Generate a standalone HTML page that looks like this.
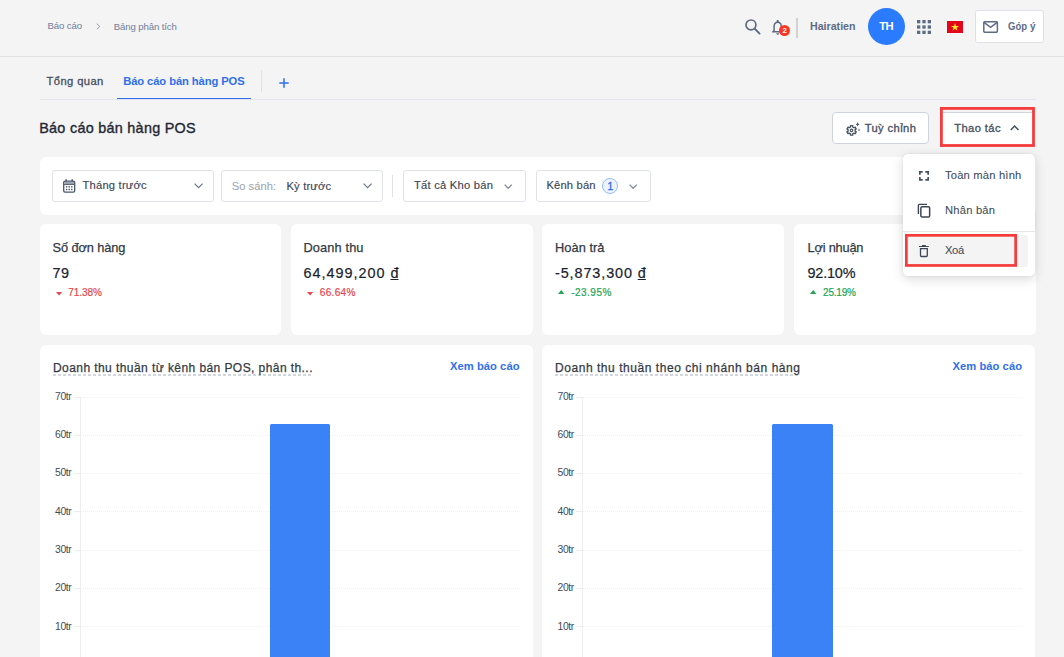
<!DOCTYPE html>
<html><head><meta charset="utf-8">
<style>
*{margin:0;padding:0;box-sizing:border-box}
html,body{width:1064px;height:657px;overflow:hidden;background:#f4f4f4;font-family:"Liberation Sans",sans-serif}
.a{position:absolute}
.t{position:absolute;white-space:nowrap;line-height:1;font-family:"Liberation Sans",sans-serif}
.card{position:absolute;background:#fff;border-radius:6px}
.dd{position:absolute;background:#fff;border:1px solid #dfe2e6;border-radius:3px;top:170px;height:31.5px}
svg{position:absolute;overflow:visible}
</style></head><body>
<!-- header -->
<div class="a" style="left:0;top:56px;width:1064px;height:1px;background:#dfe1e4"></div>
<svg style="left:95.5px;top:22.7px" width="5" height="7" viewBox="0 0 5 7"><path d="M0.8 0.6 L3.8 3.4 L0.8 6.2" fill="none" stroke="#8b93a1" stroke-width="0.9"/></svg>
<!-- search -->
<svg style="left:745px;top:19px" width="16" height="16" viewBox="0 0 16 16"><circle cx="5.95" cy="5.95" r="4.95" fill="none" stroke="#5d6b85" stroke-width="1.7"/><path d="M9.5 9.5 L14.6 14.6" stroke="#5d6b85" stroke-width="1.8" stroke-linecap="round"/></svg>
<!-- bell -->
<svg style="left:769.3px;top:17.6px" width="17.4" height="18.3" viewBox="0 0 24 24" preserveAspectRatio="none"><path fill="#5d6b85" d="M12 22c1.1 0 2-.9 2-2h-4c0 1.1.9 2 2 2zm6-6v-5c0-3.07-1.63-5.64-4.5-6.32V4c0-.83-.67-1.5-1.5-1.5s-1.5.67-1.5 1.500v.68C7.640 5.360 6 7.920 6 11v5l-2 2v1h16v-1l-2-2zm-2 1H8v-6c0-2.480 1.510-4.500 4-4.500s4 2.020 4 4.500v6z"/></svg>
<div class="a" style="left:779px;top:24.8px;width:11.2px;height:11.2px;border-radius:50%;background:#fb3424"></div>
<span class="t" style="left:782.4px;top:26.9px;font-size:7.8px;font-weight:700;color:#fff">2</span>
<div class="a" style="left:796px;top:18px;width:1.6px;height:20px;background:#d2d2d2"></div>
<!-- avatar -->
<div class="a" style="left:868px;top:8px;width:37px;height:37px;border-radius:50%;background:#2b7bff"></div>
<!-- grid -->
<svg style="left:917px;top:20px" width="14" height="14" viewBox="0 0 14 14" fill="#5d6b85"><rect x="0" y="0" width="3.3" height="3.3"/><rect x="5.35" y="0" width="3.3" height="3.3"/><rect x="10.7" y="0" width="3.3" height="3.3"/><rect x="0" y="5.35" width="3.3" height="3.3"/><rect x="5.35" y="5.35" width="3.3" height="3.3"/><rect x="10.7" y="5.35" width="3.3" height="3.3"/><rect x="0" y="10.7" width="3.3" height="3.3"/><rect x="5.35" y="10.7" width="3.3" height="3.3"/><rect x="10.7" y="10.7" width="3.3" height="3.3"/></svg>
<!-- flag -->
<div class="a" style="left:947px;top:20.6px;width:16px;height:12.8px;background:#e3061a"></div>
<svg style="left:951px;top:23px" width="8" height="8" viewBox="0 0 10 10"><path d="M5 0 L6.2 3.6 L10 3.6 L6.9 5.9 L8.1 9.6 L5 7.3 L1.9 9.6 L3.1 5.9 L0 3.6 L3.8 3.6 Z" fill="#ffec1f"/></svg>
<!-- gop y -->
<div class="a" style="left:975px;top:10.4px;width:68.7px;height:32.3px;background:#fff;border:1px solid #dde1e7;border-radius:2.5px"></div>
<svg style="left:983px;top:21px" width="15.2" height="12" viewBox="0 0 15.2 12"><rect x="0.8" y="0.8" width="13.6" height="10.4" rx="0.9" fill="none" stroke="#5d6b85" stroke-width="1.5"/><path d="M1 1.4 L7.6 6.3 L14.2 1.4" fill="none" stroke="#5d6b85" stroke-width="1.5"/></svg>

<!-- tabs -->
<div class="a" style="left:40px;top:99px;width:995.5px;height:1px;background:#e1e4ea"></div>
<div class="a" style="left:117px;top:97.9px;width:134px;height:1.5px;background:#2f6fed"></div>
<div class="a" style="left:261px;top:70px;width:1px;height:22px;background:#dfe2e7"></div>
<svg style="left:278.5px;top:77.5px" width="10" height="10" viewBox="0 0 10 10"><path d="M5 0.3 V9.7 M0.3 5 H9.7" stroke="#2f6fed" stroke-width="1.5"/></svg>

<!-- buttons -->
<div class="a" style="left:832.2px;top:112.2px;width:96.5px;height:31.4px;background:#fff;border:1px solid #cfd4dc;border-radius:4px"></div>
<svg style="left:845.5px;top:123px" width="14" height="13" viewBox="0 0 14 13"><path d="M6.69 2.67 L4.51 2.67 L4.49 3.98 L3.19 4.72 L2.05 4.09 L0.96 5.98 L2.08 6.65 L2.08 8.15 L0.96 8.82 L2.05 10.71 L3.19 10.08 L4.49 10.82 L4.51 12.13 L6.69 12.13 L6.71 10.82 L8.01 10.08 L9.15 10.71 L10.24 8.82 L9.12 8.15 L9.12 6.65 L10.24 5.98 L9.15 4.09 L8.01 4.72 L6.71 3.98 Z" fill="none" stroke="#46515f" stroke-width="1.35" stroke-linejoin="round"/><circle cx="5.6" cy="7.4" r="1.25" fill="none" stroke="#46515f" stroke-width="1.1"/><path d="M11.6 -0.7 L12.3 0.7 L13.7 1.4 L12.3 2.1 L11.6 3.5 L10.9 2.1 L9.5 1.4 L10.9 0.7 Z" fill="#46515f"/><path d="M13 5.4 L13.75 6.9 L13 8.4 L12.25 6.9 Z" fill="#46515f"/></svg>
<div class="a" style="left:941.4px;top:111.5px;width:92.5px;height:34px;background:#fff;border-top:1px solid #cfd4dc"></div>
<div class="a" style="left:941.4px;top:108.1px;width:92.5px;height:3.4px;background:#f4f4f4"></div><svg style="left:940.2px;top:106.9px" width="94.9" height="39.9"><rect x="1.4" y="1.4" width="92.1" height="37.1" fill="none" stroke="#f63b3d" stroke-width="2.8"/></svg>
<svg style="left:1010.4px;top:124.9px" width="9.2" height="5.6" viewBox="0 0 9.2 5.6"><path d="M0.7 5 L4.6 1 L8.5 5" fill="none" stroke="#46515f" stroke-width="1.5"/></svg>

<!-- filter card -->
<div class="card" style="left:40px;top:157px;width:995.5px;height:57.5px"></div>
<div class="dd" style="left:52px;width:161.8px"></div>
<div class="dd" style="left:221px;width:161.5px"></div>
<div class="dd" style="left:403.2px;width:122.5px"></div>
<div class="dd" style="left:536.2px;width:114.5px"></div>
<div class="a" style="left:392.4px;top:175px;width:1px;height:22px;background:#dfe2e7"></div>
<!-- calendar -->
<svg style="left:63.2px;top:179px" width="12.4" height="13.8" viewBox="0 0 12.4 13.8"><rect x="0.7" y="2.1" width="11" height="11" rx="1.4" fill="none" stroke="#4a5568" stroke-width="1.3"/><rect x="1.3" y="3" width="9.8" height="1.9" fill="#9aa2af"/><path d="M0.7 5.4 H11.7" stroke="#4a5568" stroke-width="1"/><path d="M3.2 0.2 V2.4 M9.2 0.2 V2.4" stroke="#4a5568" stroke-width="1.4"/><g fill="#4a5568"><rect x="2.9" y="7.1" width="1.4" height="1.4"/><rect x="5.5" y="7.1" width="1.4" height="1.4"/><rect x="8.1" y="7.1" width="1.4" height="1.4"/><rect x="2.9" y="9.8" width="1.4" height="1.4"/><rect x="5.5" y="9.8" width="1.4" height="1.4"/><rect x="8.1" y="9.8" width="1.4" height="1.4"/></g></svg>
<!-- chevrons down -->
<svg style="left:194.2px;top:183px" width="9.2" height="5.6" viewBox="0 0 9.2 5.6"><path d="M0.6 0.6 L4.6 4.7 L8.6 0.6" fill="none" stroke="#727b89" stroke-width="1.3"/></svg>
<svg style="left:363.4px;top:183px" width="9.2" height="5.6" viewBox="0 0 9.2 5.6"><path d="M0.6 0.6 L4.6 4.7 L8.6 0.6" fill="none" stroke="#727b89" stroke-width="1.3"/></svg>
<svg style="left:503.6px;top:183.6px" width="8.4" height="5.2" viewBox="0 0 8.4 5.2"><path d="M0.6 0.6 L4.2 4.3 L7.8 0.6" fill="none" stroke="#828b99" stroke-width="1.3"/></svg>
<svg style="left:629px;top:183.6px" width="8.4" height="5.2" viewBox="0 0 8.4 5.2"><path d="M0.6 0.6 L4.2 4.3 L7.8 0.6" fill="none" stroke="#828b99" stroke-width="1.3"/></svg>
<div class="a" style="left:602px;top:177.8px;width:16px;height:16px;border-radius:50%;background:#edf4ff;border:1px solid #93bdfc"></div>

<!-- KPI cards -->
<div class="card" style="left:40px;top:224px;width:241.2px;height:111.4px"></div>
<div class="card" style="left:291px;top:224px;width:241.6px;height:111.4px"></div>
<div class="card" style="left:542px;top:224px;width:242px;height:111.4px"></div>
<div class="card" style="left:794px;top:224px;width:241.6px;height:111.4px"></div>
<svg style="left:55.9px;top:291.7px" width="6.2" height="3.5" viewBox="0 0 5.4 3.2" preserveAspectRatio="none"><path d="M0 0 H5.4 L2.7 3.2 Z" fill="#e5484d"/></svg>
<svg style="left:306.9px;top:291.7px" width="6.2" height="3.5" viewBox="0 0 5.4 3.2" preserveAspectRatio="none"><path d="M0 0 H5.4 L2.7 3.2 Z" fill="#e5484d"/></svg>
<svg style="left:558.2px;top:290.4px" width="6.4" height="4" viewBox="0 0 6 3.4" preserveAspectRatio="none"><path d="M0 3.4 H6 L3 0 Z" fill="#23a455"/></svg>
<svg style="left:810.4px;top:290.4px" width="6.4" height="4" viewBox="0 0 6 3.4" preserveAspectRatio="none"><path d="M0 3.4 H6 L3 0 Z" fill="#23a455"/></svg>

<!-- chart cards -->
<div class="card" style="left:40px;top:345px;width:492.5px;height:330px"></div>
<div class="card" style="left:542px;top:345px;width:493px;height:330px"></div>
<svg style="left:53px;top:374.4px" width="259.5" height="2"><path d="M0 1 H259.5" stroke="#c4cad5" stroke-width="1.4" stroke-dasharray="3 2"/></svg>
<svg style="left:555px;top:374.4px" width="245" height="2"><path d="M0 1 H245" stroke="#c4cad5" stroke-width="1.4" stroke-dasharray="3 2"/></svg>
<div class="a" style="left:80.5px;top:396.50px;width:439.5px;height:0;border-top:1px dotted #f0f0f0"></div>
<div class="a" style="left:74.0px;top:396.50px;width:6.5px;height:1px;background:#ececec"></div>
<div class="a" style="left:80.5px;top:434.75px;width:439.5px;height:0;border-top:1px dotted #f0f0f0"></div>
<div class="a" style="left:74.0px;top:434.75px;width:6.5px;height:1px;background:#ececec"></div>
<div class="a" style="left:80.5px;top:473.00px;width:439.5px;height:0;border-top:1px dotted #f0f0f0"></div>
<div class="a" style="left:74.0px;top:473.00px;width:6.5px;height:1px;background:#ececec"></div>
<div class="a" style="left:80.5px;top:511.25px;width:439.5px;height:0;border-top:1px dotted #f0f0f0"></div>
<div class="a" style="left:74.0px;top:511.25px;width:6.5px;height:1px;background:#ececec"></div>
<div class="a" style="left:80.5px;top:549.50px;width:439.5px;height:0;border-top:1px dotted #f0f0f0"></div>
<div class="a" style="left:74.0px;top:549.50px;width:6.5px;height:1px;background:#ececec"></div>
<div class="a" style="left:80.5px;top:587.75px;width:439.5px;height:0;border-top:1px dotted #f0f0f0"></div>
<div class="a" style="left:74.0px;top:587.75px;width:6.5px;height:1px;background:#ececec"></div>
<div class="a" style="left:80.5px;top:626.00px;width:439.5px;height:0;border-top:1px dotted #f0f0f0"></div>
<div class="a" style="left:74.0px;top:626.00px;width:6.5px;height:1px;background:#ececec"></div>
<div class="a" style="left:80.0px;top:396.5px;width:1.4px;height:262px;background:#efefef"></div>
<div class="a" style="left:269.6px;top:424.2px;width:60.8px;height:240px;background:#3b82f6;border-radius:1.5px 1.5px 0 0"></div>
<div class="a" style="left:582.5px;top:396.50px;width:439.5px;height:0;border-top:1px dotted #f0f0f0"></div>
<div class="a" style="left:576.0px;top:396.50px;width:6.5px;height:1px;background:#ececec"></div>
<div class="a" style="left:582.5px;top:434.75px;width:439.5px;height:0;border-top:1px dotted #f0f0f0"></div>
<div class="a" style="left:576.0px;top:434.75px;width:6.5px;height:1px;background:#ececec"></div>
<div class="a" style="left:582.5px;top:473.00px;width:439.5px;height:0;border-top:1px dotted #f0f0f0"></div>
<div class="a" style="left:576.0px;top:473.00px;width:6.5px;height:1px;background:#ececec"></div>
<div class="a" style="left:582.5px;top:511.25px;width:439.5px;height:0;border-top:1px dotted #f0f0f0"></div>
<div class="a" style="left:576.0px;top:511.25px;width:6.5px;height:1px;background:#ececec"></div>
<div class="a" style="left:582.5px;top:549.50px;width:439.5px;height:0;border-top:1px dotted #f0f0f0"></div>
<div class="a" style="left:576.0px;top:549.50px;width:6.5px;height:1px;background:#ececec"></div>
<div class="a" style="left:582.5px;top:587.75px;width:439.5px;height:0;border-top:1px dotted #f0f0f0"></div>
<div class="a" style="left:576.0px;top:587.75px;width:6.5px;height:1px;background:#ececec"></div>
<div class="a" style="left:582.5px;top:626.00px;width:439.5px;height:0;border-top:1px dotted #f0f0f0"></div>
<div class="a" style="left:576.0px;top:626.00px;width:6.5px;height:1px;background:#ececec"></div>
<div class="a" style="left:582.0px;top:396.5px;width:1.4px;height:262px;background:#efefef"></div>
<div class="a" style="left:772px;top:424.2px;width:60.9px;height:240px;background:#3b82f6;border-radius:1.5px 1.5px 0 0"></div>

<!-- menu -->
<div class="a" style="left:903px;top:153.8px;width:132px;height:122px;background:#fff;border-radius:5px;box-shadow:0 3px 12px rgba(0,0,0,0.15),0 0 3px rgba(0,0,0,0.08)"></div>
<div class="a" style="left:903px;top:231.2px;width:132px;height:1px;background:#e4e6ea"></div>
<div class="a" style="left:905px;top:235px;width:123px;height:31.5px;background:#f4f4f5;border-radius:3px"></div>
<svg style="left:905px;top:233.9px" width="112" height="32.8"><rect x="1.35" y="1.35" width="109.3" height="30.1" fill="none" stroke="#f63b3d" stroke-width="2.7"/></svg>
<!-- fullscreen -->
<svg style="left:919px;top:171.2px" width="10" height="9.8" viewBox="0 0 10 9.8"><path d="M0.85 3.7 V0.85 H3.7 M6.3 0.85 H9.15 V3.7 M9.15 6.1 V8.95 H6.3 M3.7 8.95 H0.85 V6.1" fill="none" stroke="#465060" stroke-width="1.7"/></svg>
<!-- copy -->
<svg style="left:917px;top:203.4px" width="13.6" height="14.8" viewBox="0 0 13.6 14.8"><path d="M1.4 10.9 V2.2 Q1.4 1.35 2.3 1.35 H10" fill="none" stroke="#3c4655" stroke-width="1.4"/><rect x="3.85" y="3.7" width="8.8" height="10.4" rx="1.3" fill="none" stroke="#3c4655" stroke-width="1.5"/></svg>
<!-- trash -->
<svg style="left:919.4px;top:245px" width="9.8" height="12.2" viewBox="0 0 9.8 12.2"><path d="M0 1.5 H9.8 M3 0.6 H6.8" stroke="#3c4655" stroke-width="1.2"/><path d="M1.5 3.6 H8.3 V10.6 Q8.3 11.5 7.4 11.5 H2.4 Q1.5 11.5 1.5 10.6 Z" fill="none" stroke="#3c4655" stroke-width="1.3"/></svg>

<span class="t" id="bc1" style="left:47.60px;top:21.00px;font-size:9.6px;font-weight:400;color:#6f7e9c;letter-spacing:-0.120px;">Báo cáo</span>
<span class="t" id="bc2" style="left:113.80px;top:22.00px;font-size:9.6px;font-weight:400;color:#6f7e9c;letter-spacing:-0.119px;">Bảng phân tích</span>
<span class="t" id="usr" style="left:810.00px;top:21.00px;font-size:11.2px;font-weight:700;color:#5d6b85;transform-origin:0 0;transform:scaleX(0.9504);">Hairatien</span>
<span class="t" id="av" style="left:879.20px;top:21.00px;font-size:11.2px;font-weight:700;color:#ffffff;letter-spacing:-0.522px;">TH</span>
<span class="t" id="gy1" style="left:1007.90px;top:21.00px;font-size:11.2px;font-weight:700;color:#5d6b85;transform-origin:0 0;transform:scaleX(0.8492);">Góp</span>
<span class="t" id="gy2" style="left:1030.20px;top:21.00px;font-size:11.2px;font-weight:700;color:#5d6b85;transform-origin:0 0;transform:scaleX(0.8982);">ý</span>
<span class="t" id="tab1" style="left:46.50px;top:76.00px;font-size:11.2px;font-weight:400;color:#46515f;letter-spacing:0.412px;-webkit-text-stroke:0.3px #46515f;">Tổng quan</span>
<span class="t" id="tab2" style="left:123.20px;top:76.00px;font-size:11.2px;font-weight:700;color:#2f6fed;letter-spacing:-0.084px;">Báo cáo bán hàng POS</span>
<span class="t" id="ttl" style="left:39.20px;top:121.00px;font-size:14.4px;font-weight:400;color:#1f2733;letter-spacing:0.278px;-webkit-text-stroke:0.35px #1f2733;">Báo cáo bán hàng POS</span>
<span class="t" id="tc" style="left:864.70px;top:123.00px;font-size:11.2px;font-weight:400;color:#46515f;letter-spacing:0.388px;-webkit-text-stroke:0.32px #46515f;">Tuỳ chỉnh</span>
<span class="t" id="tt" style="left:954.20px;top:123.00px;font-size:11.2px;font-weight:400;color:#46515f;letter-spacing:0.393px;-webkit-text-stroke:0.32px #46515f;">Thao tác</span>
<span class="t" id="f1" style="left:82.50px;top:180.00px;font-size:11.2px;font-weight:400;color:#3c4655;letter-spacing:0.211px;-webkit-text-stroke:0.15px #3c4655;">Tháng trước</span>
<span class="t" id="f2a" style="left:231.80px;top:181.00px;font-size:11.2px;font-weight:400;color:#9aa1ab;letter-spacing:0.004px;">So sánh:</span>
<span class="t" id="f2b" style="left:286.50px;top:181.00px;font-size:11.2px;font-weight:400;color:#3c4655;letter-spacing:0.154px;-webkit-text-stroke:0.15px #3c4655;">Kỳ trước</span>
<span class="t" id="f3" style="left:414.00px;top:180.00px;font-size:11.2px;font-weight:400;color:#3c4655;letter-spacing:0.239px;-webkit-text-stroke:0.15px #3c4655;">Tất cả Kho bán</span>
<span class="t" id="f4" style="left:546.50px;top:180.00px;font-size:11.2px;font-weight:400;color:#3c4655;letter-spacing:0.156px;-webkit-text-stroke:0.15px #3c4655;">Kênh bán</span>
<span class="t" id="f4b" style="left:607.60px;top:182.00px;font-size:10.2px;font-weight:400;color:#2f6fed;letter-spacing:0.000px;-webkit-text-stroke:0.35px #2f6fed;">1</span>
<span class="t" id="m1" style="left:945.00px;top:170.00px;font-size:11.2px;font-weight:400;color:#414a58;letter-spacing:0.190px;-webkit-text-stroke:0.08px #414a58;">Toàn màn hình</span>
<span class="t" id="m2" style="left:945.00px;top:205.00px;font-size:11.2px;font-weight:400;color:#414a58;letter-spacing:0.210px;-webkit-text-stroke:0.08px #414a58;">Nhân bản</span>
<span class="t" id="m3" style="left:945.00px;top:245.00px;font-size:11.2px;font-weight:400;color:#414a58;letter-spacing:-0.353px;-webkit-text-stroke:0.08px #414a58;">Xoá</span>
<span class="t" id="k1a" style="left:52.50px;top:242.00px;font-size:12.8px;font-weight:400;color:#343a43;letter-spacing:-0.106px;-webkit-text-stroke:0.25px #343a43;">Số đơn hàng</span>
<span class="t" id="k1b" style="left:52.50px;top:266.00px;font-size:14.4px;font-weight:400;color:#1a222e;letter-spacing:0.484px;-webkit-text-stroke:0.2px #1a222e;">79</span>
<span class="t" id="k1c" style="left:68.30px;top:288.00px;font-size:10px;font-weight:400;color:#e5484d;letter-spacing:-0.044px;-webkit-text-stroke:0.2px #e5484d;">71.38%</span>
<span class="t" id="k2a" style="left:303.50px;top:242.00px;font-size:12.8px;font-weight:400;color:#343a43;letter-spacing:0.117px;-webkit-text-stroke:0.25px #343a43;">Doanh thu</span>
<span class="t" id="k2b" style="left:303.50px;top:266.00px;font-size:14.4px;font-weight:400;color:#1a222e;letter-spacing:0.996px;-webkit-text-stroke:0.2px #1a222e;">64,499,200 <u style="text-underline-offset:1.2px;text-decoration-thickness:1px;letter-spacing:0">đ</u></span>
<span class="t" id="k2c" style="left:319.80px;top:288.00px;font-size:10px;font-weight:400;color:#e5484d;letter-spacing:0.316px;-webkit-text-stroke:0.2px #e5484d;">66.64%</span>
<span class="t" id="k3a" style="left:555.00px;top:242.00px;font-size:12.8px;font-weight:400;color:#343a43;letter-spacing:0.058px;-webkit-text-stroke:0.25px #343a43;">Hoàn trả</span>
<span class="t" id="k3b" style="left:555.00px;top:266.00px;font-size:14.4px;font-weight:400;color:#1a222e;letter-spacing:0.907px;-webkit-text-stroke:0.2px #1a222e;">-5,873,300 <u style="text-underline-offset:1.2px;text-decoration-thickness:1px;letter-spacing:0">đ</u></span>
<span class="t" id="k3c" style="left:571.30px;top:288.00px;font-size:10px;font-weight:400;color:#23a455;letter-spacing:0.458px;-webkit-text-stroke:0.2px #23a455;">-23.95%</span>
<span class="t" id="k4a" style="left:807.50px;top:242.00px;font-size:12.8px;font-weight:400;color:#343a43;letter-spacing:-0.188px;-webkit-text-stroke:0.25px #343a43;">Lợi nhuận</span>
<span class="t" id="k4b" style="left:807.50px;top:266.00px;font-size:14.4px;font-weight:400;color:#1a222e;letter-spacing:-0.163px;-webkit-text-stroke:0.2px #1a222e;">92.10%</span>
<span class="t" id="k4c" style="left:823.00px;top:288.00px;font-size:10px;font-weight:400;color:#23a455;letter-spacing:-0.184px;-webkit-text-stroke:0.2px #23a455;">25.19%</span>
<span class="t" id="c1t" style="left:53.00px;top:362.00px;font-size:12px;font-weight:400;color:#343a43;letter-spacing:0.427px;-webkit-text-stroke:0.25px #343a43;">Doanh thu thuần từ kênh bán POS, phân th...</span>
<span class="t" id="c1l" style="left:450.00px;top:361.00px;font-size:11.2px;font-weight:700;color:#2f6fed;letter-spacing:0.048px;">Xem báo cáo</span>
<span class="t" id="c2t" style="left:555.00px;top:362.00px;font-size:12px;font-weight:400;color:#343a43;letter-spacing:0.547px;-webkit-text-stroke:0.25px #343a43;">Doanh thu thuần theo chi nhánh bán hàng</span>
<span class="t" id="c2l" style="left:952.50px;top:361.00px;font-size:11.2px;font-weight:700;color:#2f6fed;letter-spacing:0.048px;">Xem báo cáo</span>
<span class="t" id="y00" style="left:55.00px;top:392.00px;font-size:10.4px;font-weight:400;color:#464b55;letter-spacing:-0.402px;">70tr</span>
<span class="t" id="y01" style="left:55.00px;top:430.00px;font-size:10.4px;font-weight:400;color:#464b55;letter-spacing:-0.402px;">60tr</span>
<span class="t" id="y02" style="left:55.00px;top:468.00px;font-size:10.4px;font-weight:400;color:#464b55;letter-spacing:-0.402px;">50tr</span>
<span class="t" id="y03" style="left:55.00px;top:507.00px;font-size:10.4px;font-weight:400;color:#464b55;letter-spacing:-0.402px;">40tr</span>
<span class="t" id="y04" style="left:55.00px;top:545.00px;font-size:10.4px;font-weight:400;color:#464b55;letter-spacing:-0.402px;">30tr</span>
<span class="t" id="y05" style="left:55.00px;top:583.00px;font-size:10.4px;font-weight:400;color:#464b55;letter-spacing:-0.402px;">20tr</span>
<span class="t" id="y06" style="left:55.00px;top:622.00px;font-size:10.4px;font-weight:400;color:#464b55;letter-spacing:-0.402px;">10tr</span>
<span class="t" id="y10" style="left:557.50px;top:392.00px;font-size:10.4px;font-weight:400;color:#464b55;letter-spacing:-0.402px;">70tr</span>
<span class="t" id="y11" style="left:557.50px;top:430.00px;font-size:10.4px;font-weight:400;color:#464b55;letter-spacing:-0.402px;">60tr</span>
<span class="t" id="y12" style="left:557.50px;top:468.00px;font-size:10.4px;font-weight:400;color:#464b55;letter-spacing:-0.402px;">50tr</span>
<span class="t" id="y13" style="left:557.50px;top:507.00px;font-size:10.4px;font-weight:400;color:#464b55;letter-spacing:-0.402px;">40tr</span>
<span class="t" id="y14" style="left:557.50px;top:545.00px;font-size:10.4px;font-weight:400;color:#464b55;letter-spacing:-0.402px;">30tr</span>
<span class="t" id="y15" style="left:557.50px;top:583.00px;font-size:10.4px;font-weight:400;color:#464b55;letter-spacing:-0.402px;">20tr</span>
<span class="t" id="y16" style="left:557.50px;top:622.00px;font-size:10.4px;font-weight:400;color:#464b55;letter-spacing:-0.402px;">10tr</span>
</body></html>
